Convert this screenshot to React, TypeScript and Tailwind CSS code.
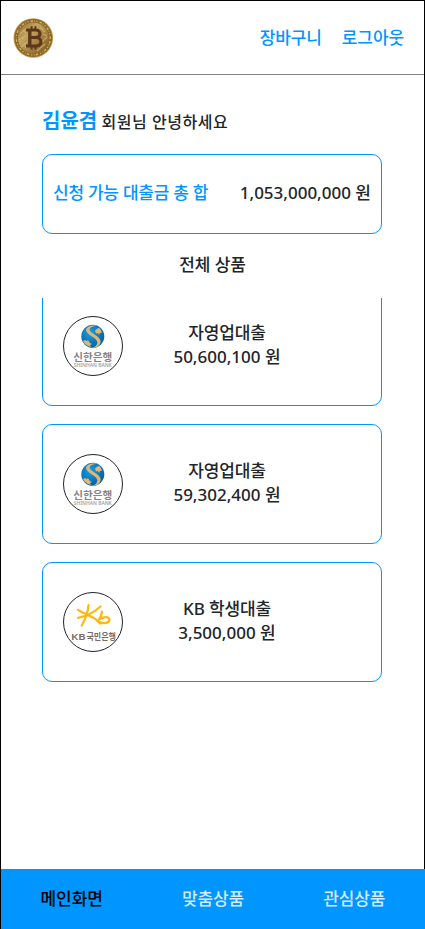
import React from "react";

type Bank = "shinhan" | "kb";

const products: { bank: Bank; name: string; amount: string }[] = [
  { bank: "shinhan", name: "자영업대출", amount: "50,600,100 원" },
  { bank: "shinhan", name: "자영업대출", amount: "59,302,400 원" },
  { bank: "kb", name: "KB 학생대출", amount: "3,500,000 원" },
];

function Coin() {
  return (
    <svg width="40" height="40" viewBox="0 0 40 40" className="block">
      <defs>
        <linearGradient id="coin" x1="0" y1="0" x2="1" y2="1">
          <stop offset="0" stopColor="#8f6a26" />
          <stop offset="0.35" stopColor="#c3a561" />
          <stop offset="0.6" stopColor="#a78541" />
          <stop offset="1" stopColor="#80591d" />
        </linearGradient>
      </defs>
      <circle cx="20.3" cy="20" r="19.8" fill="#c49a45" />
      <circle cx="20.3" cy="20" r="18.9" fill="#8a6529" />
      <circle cx="20.3" cy="20" r="17" fill="none" stroke="#d0b26a" strokeWidth="1.4" strokeDasharray="1.2 1.9 2.6 1.1 0.8 1.6" />
      <circle cx="20.3" cy="20" r="15.4" fill="url(#coin)" />
      <path d="M7 16l7-6M6 22l6-4M8 29l6-5M27 9l5 5M29 24l5-5M24 33l8-7M10 12l3 3M30 16l4 2M11 25l2 5" stroke="#d3bb80" strokeWidth="1.1" opacity="0.7" />
      <g fill="none" stroke="#5b371b" transform="translate(1 0)">
        <path d="M15.8 12.7v15.4" strokeWidth="3.4" />
        <path d="M12 12.1h10.2c5 0 5 7.3 0 7.3H16M12 27.9h10.7c5.8 0 5.6-8.5-.5-8.5" strokeWidth="3" />
        <path d="M17.6 8.2v4M21.4 8.2v4M17.6 28v3.6M21.4 28v3.6" strokeWidth="2" />
      </g>
    </svg>
  );
}

function ShinhanLogo() {
  return (
    <svg width="58" height="58" viewBox="0 0 58 58" className="block">
      <defs>
        <radialGradient id="globe" cx="0.4" cy="0.35" r="0.7">
          <stop offset="0" stopColor="#259bd8" />
          <stop offset="0.6" stopColor="#0877bd" />
          <stop offset="1" stopColor="#075b9d" />
        </radialGradient>
      </defs>
      <circle cx="28.8" cy="19.3" r="11.5" fill="url(#globe)" />
      <path d="M33 8.8c-5.5-1.2-10.6.8-11 4.2-.5 4.2 11.8 8 11.3 12.8-.2 2.3-1.8 4-4.6 5 5.4-.1 8.5-3.2 7.8-7.2-.9-5.2-11.5-7.5-10.8-11.2.3-1.8 3-3.3 7.3-3.6z" fill="#ddb679" />
      <path d="M31 13.5l3-2.5 2 .5 2 4-2 .5-1 2-1-2-2 .5zM19 24l2-1 2 1 1-1 2 3 2 1-2 1 1 2-3-1-3-2z" fill="#ddb679" />
      <text x="28.8" y="43.8" textAnchor="middle" textLength="39" lengthAdjust="spacingAndGlyphs" className="fill-[#85858a] font-['Noto_Sans_CJK_KR',sans-serif] text-[10.4px] font-bold">신한은행</text>
      <text x="28.8" y="50.2" textAnchor="middle" textLength="38" lengthAdjust="spacingAndGlyphs" className="fill-[#a2a2a6] font-['Noto_Sans',sans-serif] text-[4.4px] font-semibold">SHINHAN BANK</text>
    </svg>
  );
}

function KbLogo() {
  return (
    <svg width="58" height="58" viewBox="0 0 58 58" className="block">
      <g fill="none" stroke="#fdb813" strokeWidth="2.2" strokeLinecap="round">
        <path d="M24.5 12.2c-.5 6-3 14-6.8 20.3" />
        <path d="M13.8 16.8c5 3 11 5.4 17.2 8.8l5.6 5" />
        <path d="M14 24.8c9-1.3 16-5.5 22.5-11.3" />
        <path d="M38 18.5c-.5 4-2 7.5-4 9.8 6 3.6 12 1.2 11.3-2.2-.8-3-6-2.6-10.3.6" />
      </g>
      <text x="7" y="47" textLength="14.5" lengthAdjust="spacingAndGlyphs" className="fill-[#776d65] font-['Noto_Sans',sans-serif] text-[9.6px] font-semibold">KB</text>
      <text x="22.5" y="47" textLength="29.5" lengthAdjust="spacingAndGlyphs" className="fill-[#776d65] font-['Noto_Sans_CJK_KR',sans-serif] text-[8.6px] font-bold">국민은행</text>
    </svg>
  );
}

export default function App() {
  return (
    <div className="flex h-[929px] w-[425px] flex-col border-l border-t border-black bg-white font-['Noto_Sans','Noto_Sans_CJK_KR',sans-serif] text-[17px] font-medium leading-6 text-[#212529]">
      <div className="flex h-[868px] flex-col border-r border-black">
        <header className="flex h-[74px] shrink-0 items-center justify-between border-b border-[#808080] pl-3 pr-5 text-[#0095ff]">
          <Coin />
          <nav className="flex gap-5 tracking-[-0.1px]">
            <a>장바구니</a>
            <a>로그아웃</a>
          </nav>
        </header>
        <main className="flex min-h-0 flex-1 flex-col px-[41px]">
          <p className="mt-[31px] h-[30px] whitespace-nowrap text-base leading-[30px] tracking-[0.55px]">
            <strong className="text-xl leading-[30px] tracking-normal text-[#0095ff]">김윤겸</strong>
            <span className="tracking-normal"> </span>회원님 안녕하세요
          </p>
          <section className="mt-[18px] flex h-20 w-[340px] shrink-0 items-center justify-between whitespace-nowrap rounded-[10px] border border-[#0095ff] px-[10px] pb-0.5">
            <span className="tracking-[-0.25px] text-[#0095ff]">신청 가능 대출금 총 합</span>
            <span>1,053,000,000 원</span>
          </section>
          <h2 className="mt-[19px] text-center tracking-[-0.1px]">전체 상품</h2>
          <div className="mt-[21px] flex w-[340px] flex-1 flex-col overflow-hidden">
            <ul className="-mt-3 flex flex-col gap-[18px]">
              {products.map((product, index) => (
                <li key={index} className="flex h-[120px] shrink-0 items-center rounded-[10px] border border-[#0095ff] pl-5">
                  <div className="size-[60px] overflow-hidden rounded-full border border-[#212529]">
                    {product.bank === "kb" ? <KbLogo /> : <ShinhanLogo />}
                  </div>
                  <div className="ml-6 w-40 pb-0.5 text-center">
                    <p className="tracking-[-0.15px]">{product.name}</p>
                    <p>{product.amount}</p>
                  </div>
                </li>
              ))}
            </ul>
          </div>
        </main>
      </div>
      <nav className="grid h-[60px] grid-cols-3 items-center bg-[#0095ff] text-center tracking-[-0.1px] text-[#d0eaff]">
        <a className="text-black">메인화면</a>
        <a>맞춤상품</a>
        <a>관심상품</a>
      </nav>
    </div>
  );
}
